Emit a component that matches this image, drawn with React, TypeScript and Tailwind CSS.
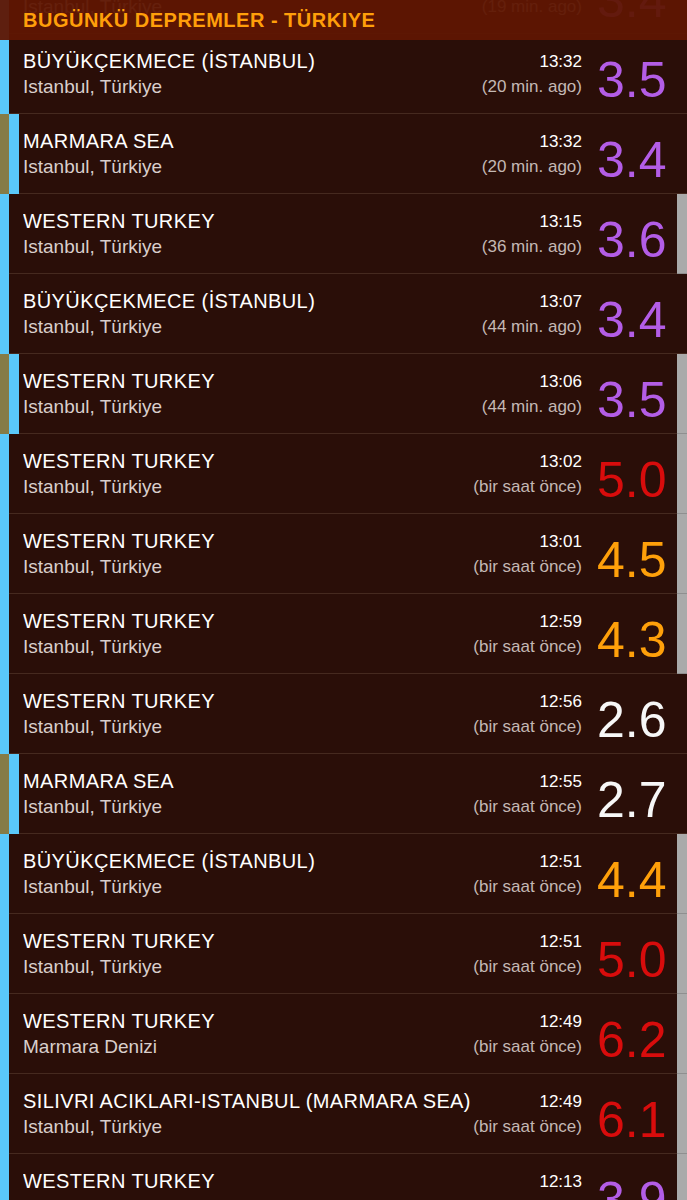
type Quake = {
  title: string;
  place: string;
  time: string;
  ago: string;
  mag: string;
  color: "purple" | "red" | "orange" | "white";
  sea?: boolean;
  side?: boolean;
};

const magColor = {
  purple: "text-[#b35de6]",
  red: "text-[#d80c0c]",
  orange: "text-[#ffa00a]",
  white: "text-[#f7f7f7]",
};

const ist = "Istanbul, Türkiye";
const hour = "(bir saat önce)";

const quakes: Quake[] = [
  { title: "MARMARA SEA", place: ist, time: "13:33", ago: "(19 min. ago)", mag: "3.4", color: "purple" },
  { title: "BÜYÜKÇEKMECE (İSTANBUL)", place: ist, time: "13:32", ago: "(20 min. ago)", mag: "3.5", color: "purple" },
  { title: "MARMARA SEA", place: ist, time: "13:32", ago: "(20 min. ago)", mag: "3.4", color: "purple", sea: true },
  { title: "WESTERN TURKEY", place: ist, time: "13:15", ago: "(36 min. ago)", mag: "3.6", color: "purple", side: true },
  { title: "BÜYÜKÇEKMECE (İSTANBUL)", place: ist, time: "13:07", ago: "(44 min. ago)", mag: "3.4", color: "purple" },
  { title: "WESTERN TURKEY", place: ist, time: "13:06", ago: "(44 min. ago)", mag: "3.5", color: "purple", sea: true, side: true },
  { title: "WESTERN TURKEY", place: ist, time: "13:02", ago: hour, mag: "5.0", color: "red", side: true },
  { title: "WESTERN TURKEY", place: ist, time: "13:01", ago: hour, mag: "4.5", color: "orange", side: true },
  { title: "WESTERN TURKEY", place: ist, time: "12:59", ago: hour, mag: "4.3", color: "orange", side: true },
  { title: "WESTERN TURKEY", place: ist, time: "12:56", ago: hour, mag: "2.6", color: "white" },
  { title: "MARMARA SEA", place: ist, time: "12:55", ago: hour, mag: "2.7", color: "white", sea: true },
  { title: "BÜYÜKÇEKMECE (İSTANBUL)", place: ist, time: "12:51", ago: hour, mag: "4.4", color: "orange", side: true },
  { title: "WESTERN TURKEY", place: ist, time: "12:51", ago: hour, mag: "5.0", color: "red", side: true },
  { title: "WESTERN TURKEY", place: "Marmara Denizi", time: "12:49", ago: hour, mag: "6.2", color: "red", side: true },
  { title: "SILIVRI ACIKLARI-ISTANBUL (MARMARA SEA)", place: ist, time: "12:49", ago: hour, mag: "6.1", color: "red", side: true },
  { title: "WESTERN TURKEY", place: ist, time: "12:13", ago: hour, mag: "3.9", color: "purple", side: true },
];

function QuakeRow({ q }: { q: Quake }) {
  return (
    <div className="flex h-[80px]">
      <div className="flex w-[23px] shrink-0">
        {q.sea && <div className="w-[9px] bg-[#857b47]" />}
        <div className={q.sea ? "w-[10px] bg-[#5ac8fa]" : "w-[9px] bg-[#5ac8fa]"} />
        <div className="flex-1 border-b border-[#45291f]" />
      </div>
      <div className="flex min-w-0 flex-1 border-b border-[#45291f]">
        <div className="min-w-0 flex-1 pt-[15px]">
          <div className="truncate text-[20px] leading-[24px] tracking-[0.4px] text-white">{q.title}</div>
          <div className="mt-[2px] text-[19px] leading-[24px] text-[#d9cfcc]">{q.place}</div>
        </div>
        <div className="shrink-0 pt-[16px] text-right">
          <div className="text-[17px] leading-[24px] text-white">{q.time}</div>
          <div className="mt-[1px] text-[17px] leading-[24px] text-[#c4b8b4]">{q.ago}</div>
        </div>
        <div className="w-[95px] shrink-0 pl-[15px]">
          <div className={`mt-[21px] text-[50px] leading-[50px] ${magColor[q.color]}`}>{q.mag}</div>
        </div>
      </div>
      <div
        className={
          q.side
            ? "w-[10px] shrink-0 border-b border-[#8f8f8f] bg-[#aaaaaa]"
            : "w-[10px] shrink-0 border-b border-[#45291f]"
        }
      />
    </div>
  );
}

export default function App() {
  return (
    <div className="relative h-[1200px] w-[687px] overflow-hidden bg-[#2a0e08] font-['Liberation_Sans',Arial,sans-serif]">
      <div className="mt-[-46px]">
        {quakes.map((q, i) => (
          <QuakeRow key={i} q={q} />
        ))}
      </div>
      <header className="absolute inset-x-0 top-0 flex h-[40px] items-center bg-[#5f1602]/95 pl-[23px]">
        <span className="text-[20px] font-bold tracking-[0.5px] text-[#ff9f0a]">BUGÜNKÜ DEPREMLER - TÜRKIYE</span>
      </header>
    </div>
  );
}
